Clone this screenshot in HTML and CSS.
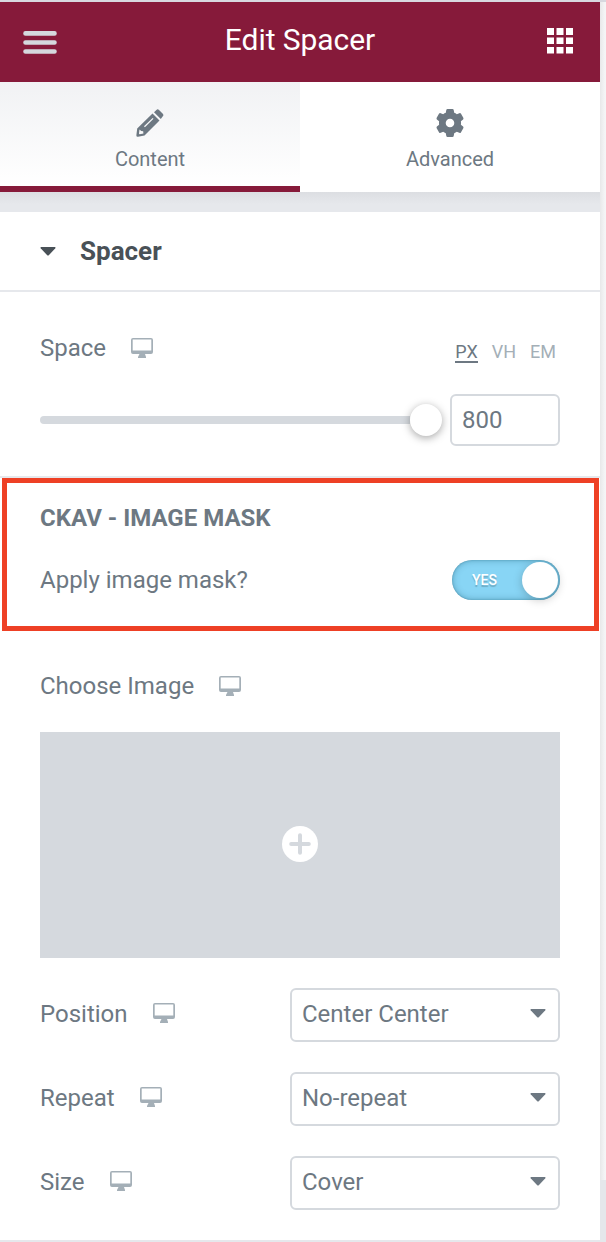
FILE: index.html
```html
<!DOCTYPE html>
<html lang="en">
<head>
<meta charset="utf-8">
<title>Edit Spacer</title>
<link rel="stylesheet" href="styles.css">
</head>
<body>
<svg class="defs" width="0" height="0">
  <symbol id="desktop" viewBox="0 0 22 20">
    <path fill-rule="evenodd" d="M2 0H20Q22 0 22 2V14Q22 16 20 16H14L15 19V20H7V19L8.500 16H2Q0 16 0 14V2Q0 0 2 0ZM1.700 1.500V12.500H20.300V1.500Z"/>
  </symbol>
  <symbol id="caret" viewBox="0 0 16 9">
    <path d="M1 0H15Q16 .3 15.300 1.200L9 8Q8 9 7 8L.7 1.200Q0 .3 1 0Z"/>
  </symbol>
</svg>
<div class="app">
<main class="panel">
  <header class="header">
    <svg class="menu" viewBox="0 0 34 24"><path d="M2.500 2.400H31.500M2.500 11.500H31.500M2.500 20.500H31.500"/></svg>
    <h1 class="title">Edit Spacer</h1>
    <svg class="apps" viewBox="0 0 26 26"><path d="M0 0h7v7H0zM9.500 0h7v7h-7zM19 0h7v7h-7zM0 9.500h7v6.500H0zM9.500 9.500h7v6.500h-7zM19 9.500h7v6.500h-7zM0 19h7v6.500H0zM9.500 19h7v6.500h-7zM19 19h7v6.500h-7z"/></svg>
  </header>
  <nav class="tabs">
    <div class="tab active">
      <svg class="tab-icon" viewBox="0 0 28 28"><path fill-rule="evenodd" d="M1.200 19.500L16.500 4.500L23.500 11.600L8.500 26.500L2 27.700Q.2 28 .4 26ZM3.500 20.500L3 24.500Q3 25.300 3.800 25.200L7.400 24.500L7.200 22.300L5.200 22ZM8 17.300L8.900 18.200L17.500 9.800L16.600 8.900ZM18 3.200L20.400 .9Q21.700-.3 23 .9L26.800 4.700Q28 6 26.800 7.300L24.800 10Z"/></svg>
      <span>Content</span>
    </div>
    <div class="tab">
      <svg class="tab-icon" viewBox="0 0 28 28"><path fill-rule="evenodd" d="M11.500 0H16.500Q17.500 0 17.700 1L18.200 3.800Q19.600 4.300 20.800 5.200L23.300 4.200Q24.300 3.800 24.900 4.600L27.300 8.700Q27.800 9.700 27.100 10.400L24.900 12.300Q25.200 14 24.900 15.700L27.100 17.600Q27.800 18.300 27.300 19.300L24.900 23.400Q24.300 24.200 23.300 23.800L20.800 22.800Q19.600 23.700 18.200 24.200L17.700 27Q17.500 28 16.500 28H11.500Q10.500 28 10.300 27L9.800 24.200Q8.400 23.700 7.200 22.800L4.700 23.800Q3.700 24.200 3.100 23.400L.7 19.300Q.2 18.300 .9 17.600L3.100 15.700Q2.800 14 3.100 12.300L.9 10.400Q.2 9.700 .7 8.700L3.100 4.600Q3.700 3.800 4.700 4.200L7.200 5.200Q8.400 4.300 9.800 3.800L10.300 1Q10.500 0 11.500 0ZM14 9.700A4.300 4.300 0 1 0 14 18.300A4.300 4.300 0 1 0 14 9.700Z"/></svg>
      <span>Advanced</span>
    </div>
  </nav>
  <div class="section-title">
    <svg class="caret"><use href="#caret"/></svg>
    <h2>Spacer</h2>
  </div>
  <section class="space">
    <div class="space-head">
      <div class="label">Space<svg class="device"><use href="#desktop"/></svg></div>
      <div class="units"><span class="current">PX</span><span>VH</span><span>EM</span></div>
    </div>
    <div class="slider-row">
      <div class="track"></div><div class="knob"></div>
      <div class="number">800</div>
    </div>
  </section>
  <section class="mask">
    <h3>CKAV - IMAGE MASK</h3>
    <div class="mask-row">
      <span>Apply image mask?</span>
      <div class="switch"><span>YES</span><i class="switch-knob"></i></div>
    </div>
  </section>
  <section class="image">
    <div class="label">Choose Image<svg class="device"><use href="#desktop"/></svg></div>
    <div class="preview"><svg class="plus" viewBox="0 0 36 36"><circle cx="18" cy="18" r="18"/><path d="M18 9.200V26.800M9.200 18H26.800"/></svg></div>
    <div class="row"><div class="label">Position<svg class="device"><use href="#desktop"/></svg></div><div class="select">Center Center<svg class="caret"><use href="#caret"/></svg></div></div>
    <div class="row"><div class="label">Repeat<svg class="device"><use href="#desktop"/></svg></div><div class="select">No-repeat<svg class="caret"><use href="#caret"/></svg></div></div>
    <div class="row"><div class="label">Size<svg class="device"><use href="#desktop"/></svg></div><div class="select">Cover<svg class="caret"><use href="#caret"/></svg></div></div>
  </section>
</main>
<aside class="edge"></aside>
</div>
</body>
</html>
```
FILE: styles.css
```css
* { box-sizing: border-box; }
body { margin: 0; font-family: Roboto, "Liberation Sans", sans-serif; color: #6d7882; font-size: 24px; line-height: 28px; }
h1, h2, h3 { margin: 0; }
svg { display: block; flex: none; fill: currentColor; }
.defs { position: absolute; }
.app { display: flex; width: 606px; height: 1242px; border-top: 2px solid #d8d8df; overflow: hidden; }
.panel { width: 600px; height: 1240px; background: #fff; border-bottom: 2px solid #e6e8ec; }
.edge { width: 6px; height: 1240px; background: linear-gradient(90deg, #e8e8e9, #f5f5f6 5px); border-bottom: 62px solid #e5e7eb; }
.header { display: flex; justify-content: space-between; height: 80px; padding: 0 27px 0 23px; background: #861a3a; color: #fff; }
.menu { width: 34px; height: 24px; margin-top: 29px; stroke: #d5d8dd; stroke-width: 4.600px; stroke-linecap: round; }
.title { font-size: 30px; line-height: 36px; font-weight: 400; letter-spacing: -.06px; margin: 20px 4px 0 0; }
.apps { width: 26px; height: 26px; margin-top: 26px; }
.tabs { display: grid; grid-template-columns: 1fr 1fr; height: 110px; }
.tab { display: flex; flex-direction: column; align-items: center; padding-top: 27px; font-size: 20px; line-height: 24px; gap: 10px; }
.tab.active { background: linear-gradient(#f1f2f4, #fff); border-bottom: 6px solid #861a3a; }
.tab-icon { width: 28px; height: 28px; }
.section-title { display: flex; align-items: center; gap: 24px; height: 100px; padding: 0 40px; border-top: 20px solid #e5e7eb; border-bottom: 2px solid #e6e8ec; border-image: linear-gradient(#dcdee2, #e6e8ec 12px, #e6e8ec) 20 0 2; color: #495157; }
.section-title h2 { font-size: 26px; font-weight: 700; line-height: 30px; }
.caret { width: 16px; height: 9px; }
.space { height: 186px; padding: 42px 40px 0; border-bottom: 2px solid #e6e8ec; }
.space-head { display: flex; justify-content: space-between; }
.label { display: flex; align-items: center; gap: 25px; height: 28px; }
.device { width: 22px; height: 20px; margin-bottom: 1px; color: #a4afb7; }
.units { display: flex; gap: 14px; height: 30px; padding-top: 8px; font-size: 18px; line-height: 20px; color: #a4afb7; margin-right: 4px; }
.current { height: 21px; color: #6d7882; border-bottom: 2px solid #6d7882; }
.slider-row { display: flex; align-items: center; margin-top: 30px; }
.track { width: 370px; height: 8px; border-radius: 4px 0 0 4px; background: #d5d9de; }
.knob { width: 32px; height: 32px; border-radius: 50%; background: #fff; box-shadow: 0 2px 8px rgba(0,0,0,.35); }
.number { width: 110px; height: 52px; margin-left: 8px; padding: 10px; border: 2px solid #d5d9de; border-radius: 6px; }
.mask { width: 597px; height: 153px; margin-left: 2px; padding: 21px 34px 0 33px; border: 5px solid #ee4025; }
.mask h3 { font-size: 24px; line-height: 28px; font-weight: 700; }
.mask-row { display: flex; align-items: center; justify-content: space-between; margin-top: 28px; }
.switch { display: flex; align-items: center; justify-content: space-between; width: 108px; height: 40px; padding: 0 2px 0 20px; border-radius: 20px; background: #88d5f5; color: #fff; font-size: 14px; line-height: 20px; font-weight: 500; text-shadow: 0 2px 1px rgba(0,0,0,.2); box-shadow: inset 0 0 7px rgba(0,65,90,.35), inset 0 0 2px rgba(0,65,90,.35); }
.switch-knob { width: 36px; height: 36px; border-radius: 50%; background: #fff; box-shadow: 0 2px 10px rgba(0,0,0,.22); }
.image { padding: 41px 40px 0; }
.preview { display: flex; align-items: center; justify-content: center; height: 226px; margin: 32px 0 30px; padding-bottom: 2px; background: #d5d9de; }
.plus { width: 36px; height: 36px; fill: #fff; stroke-linecap: round; }
.plus path { stroke: #d5d9de; stroke-width: 4px; }
.row { display: flex; justify-content: space-between; height: 54px; margin-bottom: 30px; }
.row .label { height: 52px; }
.row .device { margin-bottom: 2px; }
.select { display: flex; justify-content: space-between; width: 270px; height: 54px; padding: 10px 12px 0 10px; border: 2px solid #d5d9de; border-radius: 6px; }
.select .caret { margin-top: 9px; }
```
